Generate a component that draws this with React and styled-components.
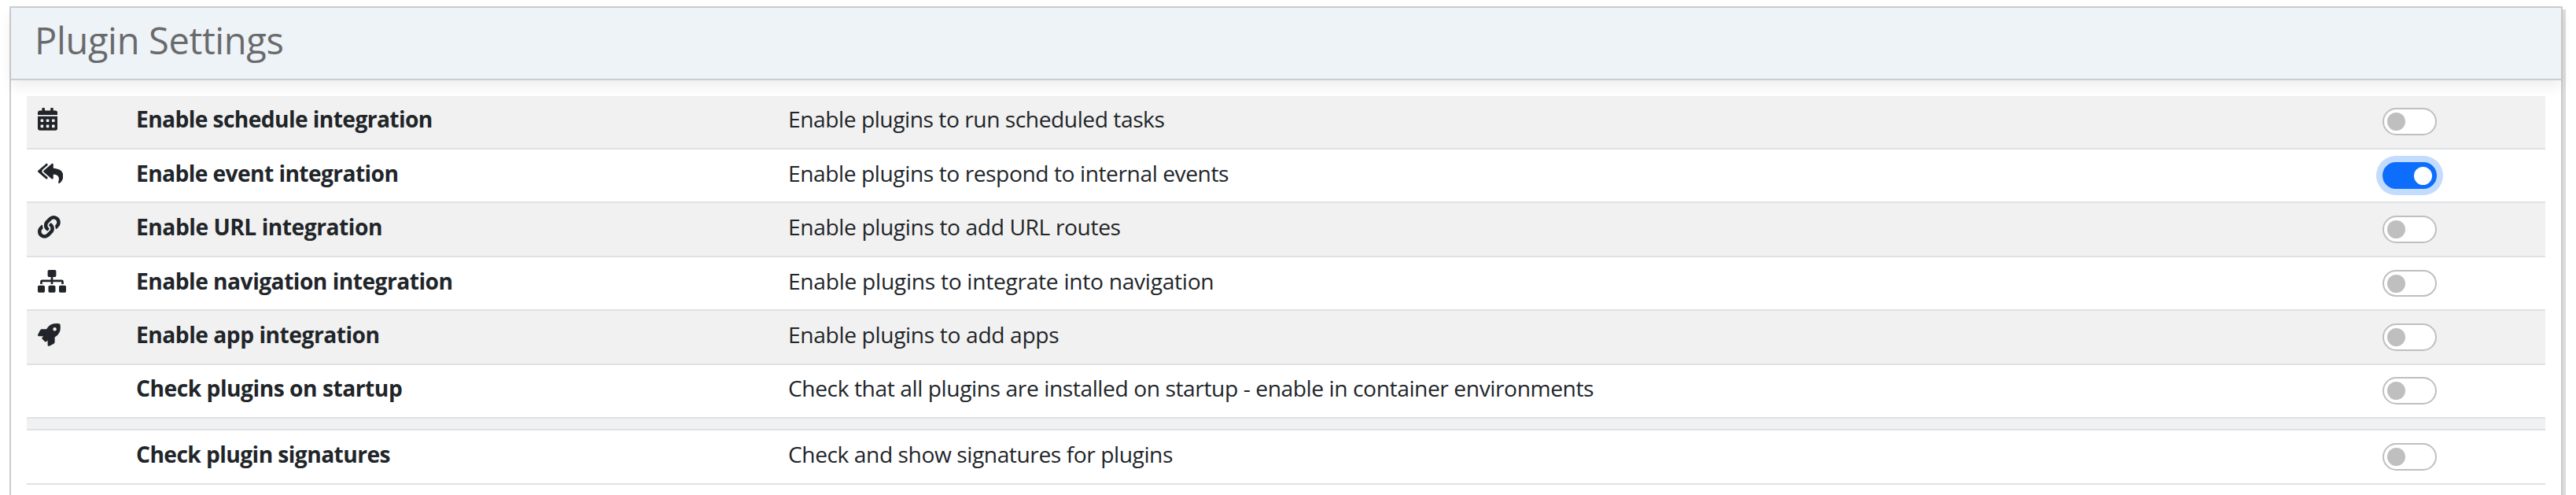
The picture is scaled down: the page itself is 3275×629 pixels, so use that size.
import React from 'react';
import styled, { createGlobalStyle, css } from 'styled-components';
import { FaCalendarAlt, FaReplyAll, FaLink, FaSitemap, FaRocket } from 'react-icons/fa';

const GlobalStyle = createGlobalStyle`
  *, *::before, *::after { box-sizing: border-box; }
  html, body { margin: 0; height: 100%; background: #fff; overflow: hidden; }
  #root { height: 100%; }
  body {
    color: #212529;
    font-family: 'Segoe UI', 'Open Sans', 'Noto Sans', sans-serif;
    font-size: 28.2px;
    line-height: 28px;
  }
`;

const Page = styled.main`
  height: 629px;
  padding: 8px 17px 0 12px;
  overflow: hidden;
`;

const Panel = styled.section`
  height: 700px;
  border: 2px solid #ccc;
  box-shadow: 4px 4px 0 #dcdcdc;
  background: #fff;
`;

const PanelHeader = styled.header`
  height: 92px;
  padding: 13px 30px 0;
  background: #edf3f7;
  border-bottom: 2px solid #ccc;
  box-shadow: 0 8px 16px rgba(0, 0, 0, 0.07);
`;

const Title = styled.h4`
  margin: 0;
  color: #6a6a6c;
  font-size: 47px;
  font-weight: 400;
  line-height: 56px;
  letter-spacing: -0.34px;
`;

const SettingsTable = styled.div`
  padding: 20px 20px 0;
`;

const stripe = css`
  background: #f1f1f1;
`;

const Row = styled.div`
  display: grid;
  grid-template-columns: 139px 829px 2027px 1fr;
  align-items: start;
  height: ${(p) => p.$height}px;
  padding-top: ${(p) => p.$pad}px;
  border-bottom: 2px solid #dee2e6;
  ${(p) => p.$striped && stripe}
`;

const Spacer = styled.div`
  height: 15px;
  border-bottom: 2px solid #dee2e6;
  ${stripe}
`;

const IconCell = styled.div`
  padding-left: 14px;
  line-height: 0;

  svg {
    display: block;
    width: ${(p) => p.$iconWidth}px;
    height: 28.8px;
  }
`;

const Name = styled.div`
  font-weight: 700;
  white-space: nowrap;
  letter-spacing: ${(p) => p.$tracking}px;
`;

const Description = styled.div`
  white-space: nowrap;
  letter-spacing: ${(p) => p.$tracking}px;
`;

const Switch = styled.button`
  display: flex;
  align-items: center;
  justify-content: ${(p) => (p.$on ? 'flex-end' : 'flex-start')};
  width: 69px;
  height: ${(p) => p.$height}px;
  padding: 0 ${(p) => (p.$on ? 4 : 3.6)}px;
  border: 2px solid ${(p) => (p.$on ? '#0d6efd' : '#bfbfbf')};
  border-radius: 35px;
  background: ${(p) => (p.$on ? '#0d6efd' : '#fff')};
  box-shadow: ${(p) => (p.$on ? '0 0 0 8px rgba(13, 110, 253, 0.25)' : 'none')};
`;

const Knob = styled.span`
  width: 23px;
  height: 23px;
  border-radius: 50%;
  background: ${(p) => (p.$on ? '#fff' : '#bfbfbf')};
`;

const settings = [
  { icon: FaCalendarAlt, iconWidth: 25.2, name: 'Enable schedule integration', text: 'Enable plugins to run scheduled tasks', nameTracking: -0.6, textTracking: -0.46, height: 68, pad: 15, track: 35 },
  { icon: FaReplyAll, iconWidth: 32.4, name: 'Enable event integration', text: 'Enable plugins to respond to internal events', nameTracking: -0.6, textTracking: -0.44, height: 68, pad: 16, track: 34, on: true },
  { icon: FaLink, iconWidth: 28.8, name: 'Enable URL integration', text: 'Enable plugins to add URL routes', nameTracking: -0.48, textTracking: -0.39, height: 69, pad: 16, track: 35 },
  { icon: FaSitemap, iconWidth: 36, name: 'Enable navigation integration', text: 'Enable plugins to integrate into navigation', nameTracking: -0.52, textTracking: -0.29, height: 68, pad: 16, track: 34 },
  { icon: FaRocket, iconWidth: 28.8, name: 'Enable app integration', text: 'Enable plugins to add apps', nameTracking: -0.49, textTracking: -0.36, height: 69, pad: 16, track: 35 },
  { name: 'Check plugins on startup', text: 'Check that all plugins are installed on startup - enable in container environments', nameTracking: -0.48, textTracking: -0.42, height: 68, pad: 15, track: 35 },
  { spacer: true },
  { name: 'Check plugin signatures', text: 'Check and show signatures for plugins', nameTracking: -0.57, textTracking: -0.44, height: 69, pad: 16, track: 35 },
];

function Setting({ item, striped }) {
  const Icon = item.icon;
  return (
    <Row $height={item.height} $pad={item.pad} $striped={striped}>
      <IconCell $iconWidth={item.iconWidth}>{Icon && <Icon />}</IconCell>
      <Name $tracking={item.nameTracking}>{item.name}</Name>
      <Description $tracking={item.textTracking}>{item.text}</Description>
      <Switch type="button" role="switch" aria-checked={!!item.on} aria-label={item.name} $on={item.on} $height={item.track}>
        <Knob $on={item.on} />
      </Switch>
    </Row>
  );
}

export default function App() {
  return (
    <>
      <GlobalStyle />
      <Page>
        <Panel>
          <PanelHeader>
            <Title>Plugin Settings</Title>
          </PanelHeader>
          <SettingsTable>
            {settings.map((item, i) =>
              item.spacer ? <Spacer key={i} /> : <Setting key={i} item={item} striped={i % 2 === 0} />
            )}
          </SettingsTable>
        </Panel>
      </Page>
    </>
  );
}
